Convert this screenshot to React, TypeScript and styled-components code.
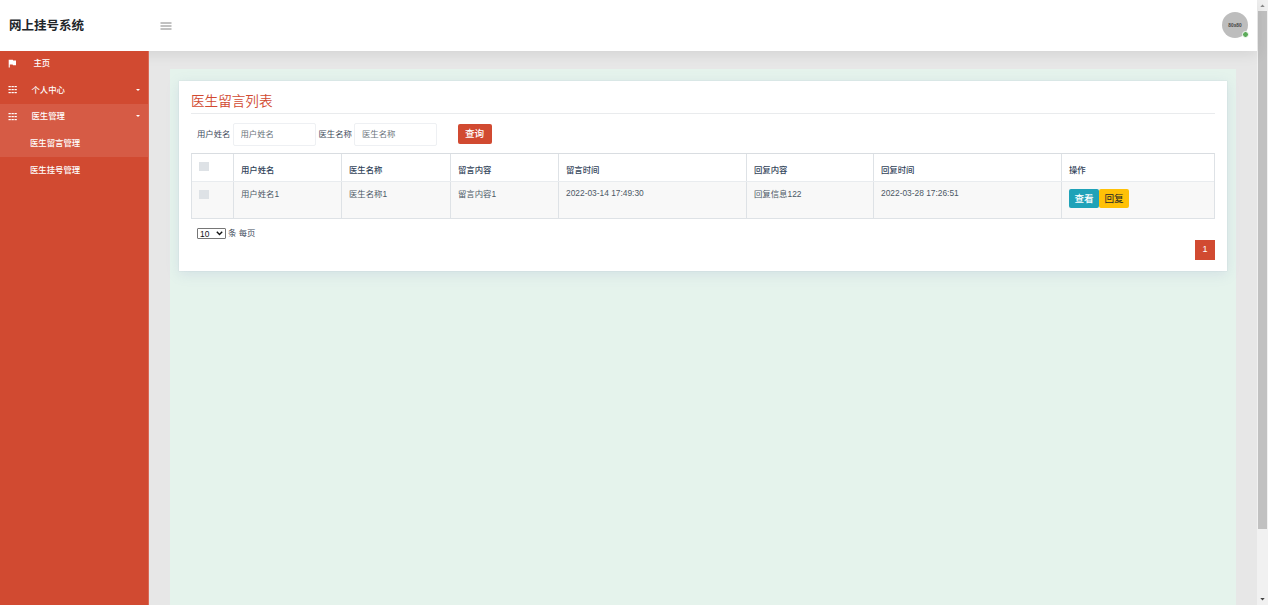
import React from 'react';
import styled, { createGlobalStyle } from 'styled-components';

const Global = createGlobalStyle`
  * { box-sizing: border-box; }
  body {
    margin: 0;
    overflow: hidden;
    background: #e7e7e7;
    color: #3f4d5c;
    font: 8.4px/12px "Liberation Sans", "Noto Sans CJK SC", sans-serif;
  }
`;

const Page = styled.div`
  display: grid;
  grid-template-columns: 1fr 11px;
  height: 605px;
`;

const Shell = styled.div`
  display: flex;
  flex-direction: column;
  min-width: 0;
`;

const Header = styled.header`
  position: relative;
  z-index: 1;
  flex: 0 0 51px;
  display: flex;
  align-items: center;
  padding: 0 9px;
  background: #fff;
  box-shadow: 0 2px 14px rgba(0, 0, 0, 0.1);
`;

const Brand = styled.div`
  width: 151px;
  padding-top: 1px;
  font-size: 12.5px;
  line-height: 20px;
  font-weight: 700;
  color: #212529;
`;

const Burger = styled.svg`
  display: block;
  width: 12px;
  height: 8px;
`;

const Avatar = styled.div`
  position: relative;
  width: 26px;
  height: 26px;
  margin: -1px 0 0 auto;
  border-radius: 50%;
  background: #bdbdbd;
  color: #444;
  font-size: 4.8px;
  font-weight: 700;
  line-height: 27px;
  text-align: center;
`;

const Online = styled.i`
  position: absolute;
  right: -1px;
  bottom: 0;
  width: 7px;
  height: 7px;
  border: 1px solid #fff;
  border-radius: 50%;
  background: #5cab5a;
`;

const Body = styled.div`
  flex: 1;
  display: flex;
  min-height: 0;
`;

const Sidebar = styled.nav`
  position: relative;
  z-index: 2;
  flex: 0 0 149px;
  background: #d14a31;
  border-right: 1px solid #d96a56;
  color: #fff;
`;

const MenuItem = styled.div<{ $active?: boolean; $h?: number; $gap?: number }>`
  display: flex;
  align-items: center;
  height: ${(p) => p.$h ?? 26}px;
  padding: 0 8px 2px;
  background: ${(p) => (p.$active ? '#d65b45' : 'transparent')};

  > span { margin-left: ${(p) => p.$gap ?? 14.5}px; font-weight: 500; }
`;

const SubItem = styled(MenuItem)`
  padding-left: 15.5px;
  padding-bottom: 1px;
`;

const MenuIcon = styled.svg`
  display: block;
  width: 9px;
  height: 9px;
  fill: #fff;
`;

const Caret = styled.i`
  margin-left: auto;
  border: 2px solid transparent;
  border-top-color: #fff;
  border-bottom: 0;
`;

const Content = styled.main`
  flex: 1;
  margin: 18px 21px 0;
  padding: 12px 9px 0;
  background: #e5f3ec;
`;

const Panel = styled.section`
  height: 190px;
  padding: 10px 12px 0;
  background: #fff;
  box-shadow: 0 3px 12px rgba(120, 130, 190, 0.17), 0 0 1px rgba(110, 120, 170, 0.25);
`;

const Title = styled.h1`
  height: 23px;
  margin: 0 0 8px;
  border-bottom: 1px solid #e9ebed;
  color: #d14a31;
  font-size: 13.6px;
  font-weight: 350;
  line-height: 22px;
`;

const Filters = styled.form`
  display: flex;
  align-items: center;
  height: 24px;
  padding-left: 6px;

  label { margin-top: -1px; }
`;

const Field = styled.input`
  width: 83px;
  height: 23px;
  margin: 1px 3px 0 2px;
  padding: 0 7px 2px;
  border: 1px solid #eef0f3;
  border-radius: 2px;
  background: #fff;
  font: inherit;
  outline: 0;

  &::placeholder { color: #6c757d; opacity: 1; }
`;

const Button = styled.button<{ $bg: string; $fg?: string; $w?: number; $weight?: number }>`
  width: ${(p) => p.$w ?? 30}px;
  height: 19px;
  padding: 0;
  border: 0;
  border-radius: 2px;
  background: ${(p) => p.$bg};
  color: ${(p) => p.$fg ?? '#fff'};
  font: ${(p) => p.$weight ?? 500} 9.6px/16px "Liberation Sans", "Noto Sans CJK SC", sans-serif;
`;

const SearchButton = styled(Button)`
  height: 20px;
  margin: -1px 0 0 17.5px;
`;

const Table = styled.div`
  margin-top: 7px;
  width: 1024px;
  border: 1px solid #dee2e6;
  border-top-color: #d9dde1;
`;

const Row = styled.div<{ $head?: boolean }>`
  display: grid;
  grid-template-columns: 42px 108px 109px 108px 188px 127px 188px 1fr;
  height: ${(p) => (p.$head ? 27 : 37)}px;
  border-top: ${(p) => (p.$head ? 0 : '1px solid #e9ecef')};
  background: ${(p) => (p.$head ? '#fff' : '#f8f8f8')};
  font-weight: ${(p) => (p.$head ? 500 : 400)};
  color: ${(p) => (p.$head ? '#33445a' : '#4c5866')};
`;

const Cell = styled.div<{ $top?: number }>`
  display: flex;
  align-items: flex-start;
  padding: ${(p) => p.$top ?? 6}px 7px 0;
  border-right: 1px solid #dee2e6;

  &:last-child { border-right: 0; }
`;

const Check = styled.i`
  width: 10px;
  height: 9px;
  margin-top: 2px;
  background: #dee2e6;
`;

const PageSize = styled.div`
  display: flex;
  align-items: center;
  gap: 2px;
  height: 12px;
  margin: 8px 0 0 6px;
`;

const Select = styled.div`
  display: flex;
  align-items: center;
  justify-content: space-between;
  width: 29px;
  height: 11px;
  margin-top: 1px;
  padding: 0 2px;
  border: 1px solid #767676;
  border-radius: 1px;
  color: #111;

  svg { display: block; width: 7px; height: 5px; }
`;

const Pager = styled.div`
  display: flex;
  justify-content: flex-end;
  margin-top: 1px;
`;

const PageNumber = styled.span`
  width: 20px;
  height: 20px;
  background: #d14a31;
  color: #fff;
  font-size: 9px;
  text-align: center;
  line-height: 18px;
`;

const Scrollbar = styled.div`
  display: flex;
  flex-direction: column;
  align-items: center;
  background: #f1f1f1;
`;

const Thumb = styled.div`
  width: 9px;
  height: 518px;
  background: #c1c1c1;
`;

const Arrow = styled.svg<{ $end?: boolean }>`
  display: block;
  width: 11px;
  height: 11px;
  margin-top: ${(p) => (p.$end ? 'auto' : 0)};
`;

const Grid = () => (
  <MenuIcon viewBox="0 0 9 9">
    {[1, 4, 7].map((y) => [0.5, 3.5, 6.5].map((x) => (
      <rect key={`${x}-${y}`} x={x} y={y} width="2.3" height="1.2" />
    )))}
  </MenuIcon>
);

const heads = ['用户姓名', '医生名称', '留言内容', '留言时间', '回复内容', '回复时间', '操作'];
const record = ['用户姓名1', '医生名称1', '留言内容1', '2022-03-14 17:49:30', '回复信息122', '2022-03-28 17:26:51'];

export default function App() {
  return (
    <Page>
      <Global />
      <Shell>
        <Header>
          <Brand>网上挂号系统</Brand>
          <Burger viewBox="0 0 12 8">
            <path d="M0.5 1H11.5M0.5 4H11.5M0.5 7H11.5" stroke="#777" strokeWidth="0.9" />
          </Burger>
          <Avatar>80x80<Online /></Avatar>
        </Header>
        <Body>
          <Sidebar>
            <MenuItem $gap={16.5}>
              <MenuIcon viewBox="0 0 9 9"><path d="M0.7 0.7H4.8L5.2 1.6H8V6.3H5L4.6 5.4H1.8V8.6H0.7Z" /></MenuIcon>
              <span>主页</span>
            </MenuItem>
            <MenuItem $h={27}><Grid /><span>个人中心</span><Caret /></MenuItem>
            <MenuItem $active><Grid /><span>医生管理</span><Caret /></MenuItem>
            <SubItem $active $h={27}><span>医生留言管理</span></SubItem>
            <SubItem><span>医生挂号管理</span></SubItem>
          </Sidebar>
          <Content>
            <Panel>
              <Title>医生留言列表</Title>
              <Filters>
                <label>用户姓名</label>
                <Field placeholder="用户姓名" />
                <label>医生名称</label>
                <Field placeholder="医生名称" />
                <SearchButton type="button" $bg="#d14a31" $w={34}>查询</SearchButton>
              </Filters>
              <Table>
                <Row $head>
                  <Cell><Check /></Cell>
                  {heads.map((h) => <Cell key={h} $top={10}>{h}</Cell>)}
                </Row>
                <Row>
                  <Cell><Check /></Cell>
                  {record.map((v) => <Cell key={v} $top={v.startsWith('2022') ? 5 : 6}>{v}</Cell>)}
                  <Cell $top={7}>
                    <Button $bg="#1fa2b8">查看</Button>
                    <Button $bg="#ffc107" $fg="#212529" $weight={400}>回复</Button>
                  </Cell>
                </Row>
              </Table>
              <PageSize>
                <Select>
                  10
                  <svg viewBox="0 0 7 5"><path d="M0.8 0.8L3.5 3.6L6.2 0.8" fill="none" stroke="#111" strokeWidth="1.4" /></svg>
                </Select>
                条 每页
              </PageSize>
              <Pager><PageNumber>1</PageNumber></Pager>
            </Panel>
          </Content>
        </Body>
      </Shell>
      <Scrollbar>
        <Arrow viewBox="0 0 11 11"><path d="M3.3 7L5.5 4.6L7.7 7Z" fill="#8a8a8a" /></Arrow>
        <Thumb />
        <Arrow $end viewBox="0 0 11 11"><path d="M3.3 4L5.5 6.4L7.7 4Z" fill="#444" /></Arrow>
      </Scrollbar>
    </Page>
  );
}
